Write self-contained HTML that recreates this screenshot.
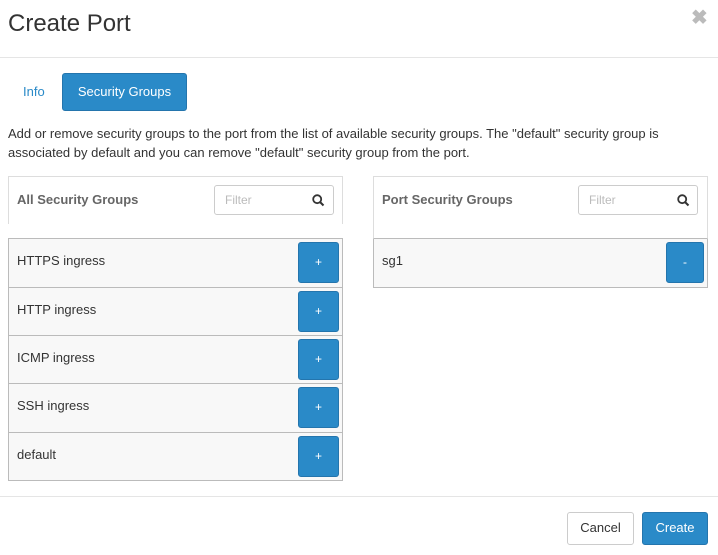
<!DOCTYPE html>
<html><head><style>
*{box-sizing:border-box;margin:0;padding:0}
body{width:718px;height:555px;background:#fff;font-family:"Liberation Sans",sans-serif;font-size:13px;color:#333;position:relative;overflow:hidden}
.a{position:absolute}
.btn{position:absolute;background:#2a8ac8;border:1px solid #2475ad;border-radius:3px;color:#fff;text-align:center}
.row{position:absolute;left:8px;width:335px;background:#f8f8f8;border:1px solid #bbb;}
.row span{position:absolute;left:8px;top:14px}
.row .btn{left:289px;top:3px;width:41px;height:41px;line-height:39px;font-size:12px}
.filter{position:absolute;width:120px;height:30px;border:1px solid #ccc;border-radius:3px;background:#fff;color:#bbb;font-size:12px;padding:7px 10px}
.hd{position:absolute;font-weight:bold;color:#666}
</style></head><body>
<div class="a" style="left:8px;top:10px;font-size:24px;color:#333">Create Port</div>
<div class="a" style="left:691px;top:5px;font-size:20px;color:#bbb;font-weight:bold">&#x2716;</div>
<div class="a" style="left:0;top:57px;width:718px;height:1px;background:#e5e5e5"></div>
<div class="a" style="left:23px;top:84px;color:#2a8ac8">Info</div>
<div class="btn" style="left:62px;top:73px;width:125px;height:38px;line-height:36px">Security Groups</div>
<div class="a" style="left:8px;top:124px;width:700px;line-height:19px">Add or remove security groups to the port from the list of available security groups. The "default" security group is associated by default and you can remove "default" security group from the port.</div>

<div class="a" style="left:8px;top:176px;width:335px;height:48px;border:1px solid #ddd;border-bottom:none"></div>
<div class="hd" style="left:17px;top:192px">All Security Groups</div>
<div class="filter" style="left:214px;top:185px">Filter</div>
<svg class="a" style="left:312px;top:194px" width="13" height="13" viewBox="0 0 13 13"><circle cx="5.2" cy="5.2" r="4" fill="none" stroke="#333" stroke-width="1.8"/><line x1="8" y1="8" x2="11.5" y2="11.5" stroke="#333" stroke-width="2"/></svg>

<div class="a" style="left:373px;top:176px;width:335px;height:63px;border:1px solid #ddd;border-bottom-color:#bbb"></div>
<div class="hd" style="left:382px;top:192px">Port Security Groups</div>
<div class="filter" style="left:578px;top:185px">Filter</div>
<svg class="a" style="left:677px;top:194px" width="13" height="13" viewBox="0 0 13 13"><circle cx="5.2" cy="5.2" r="4" fill="none" stroke="#333" stroke-width="1.8"/><line x1="8" y1="8" x2="11.5" y2="11.5" stroke="#333" stroke-width="2"/></svg>

<div class="row" style="top:238px;height:50px"><span>HTTPS ingress</span><div class="btn">+</div></div>
<div class="row" style="top:287px;height:49px"><span>HTTP ingress</span><div class="btn">+</div></div>
<div class="row" style="top:335px;height:49px"><span>ICMP ingress</span><div class="btn">+</div></div>
<div class="row" style="top:383px;height:50px"><span>SSH ingress</span><div class="btn">+</div></div>
<div class="row" style="top:432px;height:49px"><span>default</span><div class="btn">+</div></div>

<div class="row" style="left:373px;top:239px;height:49px;border-top:none"><span style="top:14px">sg1</span><div class="btn" style="left:292px;top:3px;width:38px">-</div></div>

<div class="a" style="left:0;top:496px;width:718px;height:1px;background:#e5e5e5"></div>
<div class="a" style="left:567px;top:512px;width:67px;height:33px;border:1px solid #ccc;border-radius:3px;text-align:center;line-height:30px">Cancel</div>
<div class="btn" style="left:642px;top:512px;width:66px;height:33px;line-height:30px">Create</div>
</body></html>
